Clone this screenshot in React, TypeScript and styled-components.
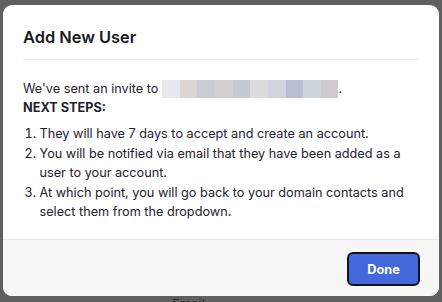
import React from "react";
import styled, { createGlobalStyle } from "styled-components";

const Global = createGlobalStyle`
  html, body { margin: 0; padding: 0; }
  body { font-family: Inter, "Noto Sans", sans-serif; background: #5f615e; }
  * { box-sizing: border-box; }
`;

const Backdrop = styled.div`
  width: 442px;
  height: 302px;
  overflow: hidden;
  background: #5f615e;
  padding: 5px 0 0 3px;
  display: flex;
  flex-direction: column;
`;

const Modal = styled.div`
  width: 436px;
  height: 291px;
  flex-shrink: 0;
  background: #ffffff;
  border-radius: 9px;
  display: flex;
  flex-direction: column;
  overflow: hidden;
`;

const Header = styled.div`
  margin: 0 20px;
  padding: 21px 0 0 0;
  height: 55px;
  border-bottom: 1px solid #e6e6e6;
`;

const Title = styled.h2`
  margin: 0;
  font-size: 16.4px;
  line-height: 22px;
  font-weight: 600;
  color: #1b1b1f;
`;

const Body = styled.div`
  flex: 1;
  padding: 20px 20px 0 20px;
  color: #1e2230;
  font-size: 12.7px;
`;

const Para = styled.p`
  margin: 0;
  line-height: 18.7px;
`;

const Redacted = styled.span`
  display: inline-flex;
  vertical-align: -5px;
  height: 18px;
  margin-left: 4px;
`;

const Block = styled.span<{ $c: string; $w: number }>`
  display: inline-block;
  width: ${(p) => p.$w}px;
  height: 18px;
  background: ${(p) => p.$c};
`;

const Strong = styled.strong`
  font-weight: 700;
`;

const Steps = styled.ol`
  margin: 7px 0 0 0;
  padding-left: 16.5px;
  line-height: 19.4px;
`;

const Footer = styled.div`
  height: 57px;
  flex-shrink: 0;
  background: #f7f7f7;
  border-top: 1px solid #e8e8e8;
  display: flex;
  align-items: center;
  justify-content: flex-end;
  padding: 2px 19px 0 0;
`;

const DoneButton = styled.button`
  width: 73px;
  height: 34px;
  border: 2px solid #141414;
  border-radius: 6px;
  background: #4467dc;
  color: #ffffff;
  font-family: Inter, "Noto Sans", sans-serif;
  font-size: 12.7px;
  font-weight: 700;
  cursor: pointer;
`;

const BehindLabel = styled.div`
  margin: 0 0 0 169px;
  font-family: Inter, sans-serif;
  font-size: 13px;
  line-height: 16px;
  color: #2a2c2e;
`;

const blocks: [string, number][] = [
  ["#e6eaee", 18],
  ["#ddd5d0", 17],
  ["#c8ccd4", 18],
  ["#d5cfcd", 18],
  ["#c4cad2", 17],
  ["#d8dcdc", 18],
  ["#d0d4dc", 18],
  ["#b9bfd0", 17],
  ["#ccd4dc", 18],
  ["#cfcace", 17],
];

export default function App() {
  return (
    <>
      <Global />
      <Backdrop>
        <Modal>
          <Header>
            <Title>Add New User</Title>
          </Header>
          <Body>
            <Para>
              We've sent an invite to
              <Redacted>
                {blocks.map(([c, w], i) => (
                  <Block key={i} $c={c} $w={w} />
                ))}
              </Redacted>
              .
            </Para>
            <Para>
              <Strong>NEXT STEPS:</Strong>
            </Para>
            <Steps>
              <li>They will have 7 days to accept and create an account.</li>
              <li>
                You will be notified via email that they have been added as a
                user to your account.
              </li>
              <li>
                At which point, you will go back to your domain contacts and
                select them from the dropdown.
              </li>
            </Steps>
          </Body>
          <Footer>
            <DoneButton>Done</DoneButton>
          </Footer>
        </Modal>
        <BehindLabel>Email</BehindLabel>
      </Backdrop>
    </>
  );
}
